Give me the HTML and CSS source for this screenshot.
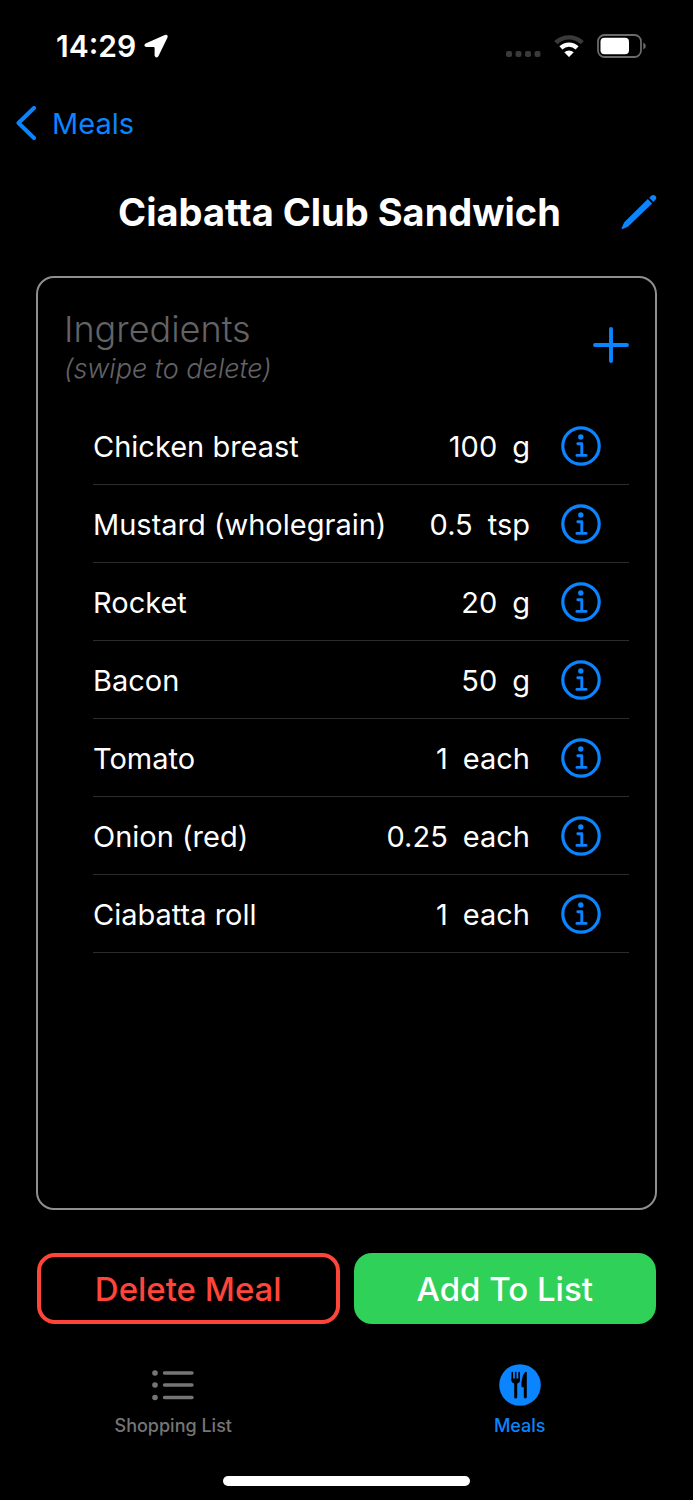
FILE: index.html
```html
<!DOCTYPE html>
<html lang="en">
<head>
<meta charset="utf-8">
<meta name="viewport" content="width=device-width, initial-scale=1">
<title>Ciabatta Club Sandwich</title>
<link rel="stylesheet" href="styles.css">
</head>
<body class="app">
  <svg class="defs" width="0" height="0" aria-hidden="true">
    <symbol id="info" viewBox="0 0 40 40">
      <circle cx="20" cy="20" r="18.2" fill="none" stroke="currentColor" stroke-width="3.2"/>
      <circle cx="19.8" cy="11" r="2.7" fill="currentColor"/>
      <path d="M16.8 17.800h4V29.200M15.900 29.400h9.200" fill="none" stroke="currentColor" stroke-width="2.9" stroke-linecap="round" stroke-linejoin="round"/>
    </symbol>
  </svg>

  <div class="status">
    <div class="status-time">
      <span>14:29</span>
      <svg width="24" height="24" viewBox="0 0 24 24" aria-hidden="true"><path d="M1.600 9.400 20.800 0.900Q24.400 0 23.500 3.400L14.400 22.200Q12.100 25 10.600 21.800V14Q10.600 13 9.600 13H2.200Q-1.200 11.800 1.600 9.400Z" fill="#fff"/></svg>
    </div>
    <div class="status-icons">
      <svg width="36" height="24" viewBox="0 0 36 24" aria-hidden="true"><g fill="#3a3a3a"><rect x="1" y="17" width="6" height="6" rx="2"/><rect x="10.500" y="17" width="6" height="6" rx="2"/><rect x="20" y="17" width="6" height="6" rx="2"/><rect x="29.500" y="17" width="6" height="6" rx="2"/></g></svg>
      <svg width="30" height="24" viewBox="0 0 30 24" aria-hidden="true"><g fill="none" stroke-width="4.400"><path d="M1.800 8.700a19 19 0 0 1 26.400 0" stroke="#3a3a3a"/><path d="M6.900 13.800a11.800 11.800 0 0 1 16.200 0" stroke="#fff"/></g><path d="M10.300 18.200a7 7 0 0 1 9.400 0L15.600 22.600q-.6.6-1.200 0Z" fill="#fff"/></svg>
      <svg width="49" height="24" viewBox="0 0 49 24" aria-hidden="true"><rect x="1" y="1" width="43" height="22" rx="6.500" fill="none" stroke="#6a6a6a" stroke-width="1.800"/><rect x="3.500" y="3.800" width="28.500" height="16.400" rx="4" fill="#fff"/><path d="M46.300 8.500q2.500 1.200 2.500 3.500t-2.500 3.500Z" fill="#6a6a6a"/></svg>
    </div>
  </div>

  <nav class="nav">
    <a class="back" href="#">
      <svg width="20" height="34" viewBox="0 0 20 34" aria-hidden="true"><path d="M18 2 2.500 17 18 32" fill="none" stroke="currentColor" stroke-width="4" stroke-linecap="round" stroke-linejoin="round"/></svg>
      <span>Meals</span>
    </a>
  </nav>

  <main class="main">
    <div class="title-row">
      <h1 class="title">Ciabatta Club Sandwich</h1>
      <button class="icon-button" type="button" aria-label="Edit meal">
        <svg width="36" height="36" viewBox="0 0 36 36" aria-hidden="true"><g fill="currentColor"><path d="M26.800 5.100 31.100 9.400 8.200 31.600Q7.400 32.400 6.400 32.900L1.600 34.900Q0.300 35.100 0.700 33.800L2.900 29.100Q3.300 28.200 4 27.500Z"/><path d="M28.200 3.800 30.300 1.700Q32.100 0.100 34.200 1.700T34.500 5.700L32.400 8Z"/></g></svg>
      </button>
    </div>

    <section class="card">
      <header class="card-head">
        <div>
          <h2 class="card-title">Ingredients</h2>
          <p class="hint">(swipe to delete)</p>
        </div>
        <button class="icon-button add" type="button" aria-label="Add ingredient">
          <svg width="36" height="36" viewBox="0 0 36 36" aria-hidden="true"><path d="M18 2v32M2 18h32" fill="none" stroke="currentColor" stroke-width="3.900" stroke-linecap="round"/></svg>
        </button>
      </header>
      <ul class="list">
        <li class="item"><span class="name">Chicken breast</span><span>100</span><span>g</span><button class="icon-button info" type="button" aria-label="Chicken breast details"><svg width="40" height="40" aria-hidden="true"><use href="#info"/></svg></button></li>
        <li class="item"><span class="name">Mustard (wholegrain)</span><span>0.5</span><span>tsp</span><button class="icon-button info" type="button" aria-label="Mustard details"><svg width="40" height="40" aria-hidden="true"><use href="#info"/></svg></button></li>
        <li class="item"><span class="name">Rocket</span><span>20</span><span>g</span><button class="icon-button info" type="button" aria-label="Rocket details"><svg width="40" height="40" aria-hidden="true"><use href="#info"/></svg></button></li>
        <li class="item"><span class="name">Bacon</span><span>50</span><span>g</span><button class="icon-button info" type="button" aria-label="Bacon details"><svg width="40" height="40" aria-hidden="true"><use href="#info"/></svg></button></li>
        <li class="item"><span class="name">Tomato</span><span>1</span><span>each</span><button class="icon-button info" type="button" aria-label="Tomato details"><svg width="40" height="40" aria-hidden="true"><use href="#info"/></svg></button></li>
        <li class="item"><span class="name">Onion (red)</span><span>0.25</span><span>each</span><button class="icon-button info" type="button" aria-label="Onion details"><svg width="40" height="40" aria-hidden="true"><use href="#info"/></svg></button></li>
        <li class="item"><span class="name">Ciabatta roll</span><span>1</span><span>each</span><button class="icon-button info" type="button" aria-label="Ciabatta roll details"><svg width="40" height="40" aria-hidden="true"><use href="#info"/></svg></button></li>
      </ul>
    </section>

    <div class="actions">
      <button class="action action-delete" type="button">Delete Meal</button>
      <button class="action action-add" type="button">Add To List</button>
    </div>
  </main>

  <nav class="tabs">
    <a class="tab" href="#">
      <svg width="42" height="42" viewBox="0 0 42 42" aria-hidden="true"><g fill="currentColor"><circle cx="3" cy="9" r="2.800"/><circle cx="3" cy="21" r="2.800"/><circle cx="3" cy="33.500" r="2.800"/></g><path d="M12.500 9h27.500M12.500 21h27.500M12.500 33.500h27.500" stroke="currentColor" stroke-width="3.400" stroke-linecap="round"/></svg>
      <span>Shopping List</span>
    </a>
    <a class="tab tab-active" href="#" aria-current="page">
      <svg width="42" height="42" viewBox="0 0 42 42" aria-hidden="true"><circle cx="21" cy="21" r="20.800" fill="currentColor"/><g fill="none" stroke="#000" stroke-linecap="round"><path d="M13.300 8.500V16.500M16.700 8.500V16.500M20.100 8.500V16.500" stroke-width="1.600"/><path d="M16.700 19V33" stroke-width="3"/></g><path d="M12.500 14.500h8.400v2.300q0 2.200-2.700 2.700h-3q-2.700-.5-2.700-2.700Z" fill="#000"/><path d="M27.800 8.200V32.800q0 1.700-1.500 1.700t-1.500-1.700V23.300h-1.300q-1.100 0-1.100-1.100 0-10 3.600-14 1.300-1.100 1.800 0Z" fill="#000"/></svg>
      <span>Meals</span>
    </a>
  </nav>
  <div class="home-bar"></div>
</body>
</html>
```
FILE: styles.css
```css
* {
  box-sizing: border-box;
}

.app {
  --blue: #0a84ff;
  display: flex;
  flex-direction: column;
  min-height: 100vh;
  margin: 0;
  background: #000;
  color: #fff;
  font-family: Inter, "Liberation Sans", sans-serif;
  font-size: 29px;
}

.defs {
  position: absolute;
}

svg {
  display: block;
  flex: none;
}

.status {
  display: flex;
  align-items: center;
  justify-content: space-between;
  height: 92px;
  padding: 0 47px 0 56px;
}

.status-time {
  display: flex;
  align-items: center;
  gap: 8px;
  font-size: 30px;
  font-weight: 600;
}

.status-icons {
  display: flex;
  align-items: center;
  gap: 13px;
}

.nav {
  display: flex;
  align-items: center;
  height: 62px;
  padding: 0 16px;
}

.back {
  display: flex;
  align-items: center;
  gap: 16px;
  color: var(--blue);
  text-decoration: none;
}

.main {
  display: flex;
  flex: 1;
  flex-direction: column;
  padding: 0 36px;
}

.title-row {
  display: grid;
  grid-template-columns: 1fr 36px;
  align-items: center;
  height: 116px;
  margin-bottom: 6px;
  padding-left: 22px;
}

.title {
  margin: 0;
  font-size: 38px;
  font-weight: 700;
  text-align: center;
}

.icon-button {
  padding: 0;
  border: 0;
  background: none;
  color: var(--blue);
}

.card {
  flex: 1;
  padding: 29px 26px;
  border: 2px solid #8e8e93;
  border-radius: 18px;
}

.card-head {
  display: flex;
  align-items: flex-start;
  justify-content: space-between;
  margin-bottom: 21px;
  color: #636366;
}

.card-title {
  margin: 0;
  font-size: 36px;
  font-weight: 300;
  line-height: 44px;
}

.hint {
  margin: 0;
  font-size: 27px;
  font-style: italic;
  font-weight: 300;
  line-height: 35px;
}

.add {
  margin-top: 20px;
}

.list {
  margin: 0;
  padding: 0 0 0 29px;
  list-style: none;
}

.item {
  display: flex;
  align-items: center;
  gap: 15px;
  height: 78px;
  padding-right: 28px;
  border-bottom: 1px solid #2c2c2e;
}

.item > span {
  padding-top: 2px;
}

.name {
  flex: 1;
}

.info {
  margin-left: 16px;
}

.actions {
  display: grid;
  grid-template-columns: 1fr 1fr;
  gap: 14px;
  padding: 43px 1px 0;
}

.action {
  height: 71px;
  border: 0;
  border-radius: 18px;
  font-family: inherit;
  font-size: 33px;
  font-weight: 500;
}

.action-delete {
  border: 4px solid #ff453a;
  background: none;
  color: #ff453a;
}

.action-add {
  background: #30d158;
  color: #fff;
}

.tabs {
  display: flex;
  padding-top: 40px;
}

.tab {
  display: flex;
  flex: 1;
  flex-direction: column;
  align-items: center;
  gap: 8px;
  color: #757575;
  font-size: 18px;
  font-weight: 500;
  line-height: 24px;
  text-decoration: none;
}

.tab-active {
  color: var(--blue);
}

.home-bar {
  width: 247px;
  height: 10px;
  margin: 38px auto 14px;
  border-radius: 5px;
  background: #fff;
}
```
